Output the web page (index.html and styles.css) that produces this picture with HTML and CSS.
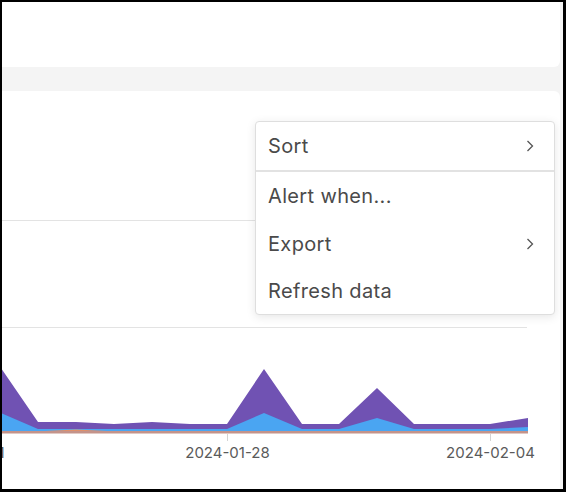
FILE: index.html
```html
<!DOCTYPE html>
<html lang="en">
<head>
<meta charset="utf-8">
<title>Chart menu</title>
<link rel="stylesheet" href="styles.css">
</head>
<body>
<div class="frame">
  <div class="card card-top"></div>
  <div class="card card-chart">
    <svg class="chart" width="558" height="398" viewBox="2 91 558 398" xmlns="http://www.w3.org/2000/svg">
      <line x1="0" y1="220.5" x2="527" y2="220.5" class="grid"/>
      <line x1="0" y1="327.5" x2="527" y2="327.5" class="grid"/>
      <polygon class="s-purple" points="-37,330 1,368 38,422 76,422 114,424 152,422 190,424 227,424 264,369 302,424 339,424 377,388 414,424 452,424 490,424 528,418 528,432 -37,432"/>
      <polygon class="s-blue" points="-37,400 1,413 38,429 76,429 114,429 152,429 190,429 227,429 264,413 302,429 339,429 377,418 414,429 452,429 490,429 528,427 528,432 -37,432"/>
      <polygon class="s-orange" points="45,431 76,429.5 107,431"/>
      <rect class="s-base" x="-37" y="431" width="565" height="2.5"/>
      <line x1="227.5" y1="434" x2="227.5" y2="441" class="tick"/>
      <line x1="490.5" y1="434" x2="490.5" y2="441" class="tick"/>
      <text x="-36" y="458" class="axis-label">2024-01-21</text>
      <text x="227.5" y="458" class="axis-label">2024-01-28</text>
      <text x="490.5" y="458" class="axis-label">2024-02-04</text>
    </svg>
    <div class="menu">
      <div class="menu-item">
        <span>Sort</span>
        <svg class="chev" width="8" height="12" viewBox="0 0 8 12"><path d="M1.5 1 L6.5 6 L1.5 11" fill="none" stroke="currentColor" stroke-width="1.3"/></svg>
      </div>
      <div class="menu-sep"></div>
      <div class="menu-item"><span>Alert when...</span></div>
      <div class="menu-item">
        <span>Export</span>
        <svg class="chev" width="8" height="12" viewBox="0 0 8 12"><path d="M1.5 1 L6.5 6 L1.5 11" fill="none" stroke="currentColor" stroke-width="1.3"/></svg>
      </div>
      <div class="menu-item"><span>Refresh data</span></div>
    </div>
  </div>
</div>
</body>
</html>
```

FILE: styles.css
```css
html {
  background: #000;
}
body {
  margin: 2px 3px 3px 2px;
  font-family: Inter, "Noto Sans", sans-serif;
}
.frame {
  width: 561px;
  height: 487px;
  background: #f4f4f4;
  display: flex;
  flex-direction: column;
  gap: 24px;
  overflow: hidden;
}
.card {
  background: #fff;
  margin-right: 3px;
}
.card-top {
  height: 65px;
  border-bottom-right-radius: 6px;
}
.card-chart {
  flex: 1;
  border-top-right-radius: 6px;
  position: relative;
}
.chart {
  display: block;
  overflow: hidden;
}
.grid {
  stroke: #e3e3e3;
  stroke-width: 1;
}
.tick {
  stroke: #d4d4d4;
  stroke-width: 1;
}
.s-purple { fill: #7052b3; }
.s-blue { fill: #4aa5f2; }
.s-orange { fill: #e0906a; }
.s-base { fill: #c4938a; }
.axis-label {
  font-family: Inter, "Noto Sans", sans-serif;
  font-size: 15px;
  fill: #5a5a5a;
  text-anchor: middle;
}
.menu {
  position: absolute;
  left: 253px;
  top: 30px;
  width: 298px;
  background: #fff;
  border: 1px solid #dedede;
  border-radius: 4px;
  box-shadow: 0 2px 10px rgba(0, 0, 0, 0.10);
  color: #4a4a4a;
  font-size: 20px;
  letter-spacing: 0.35px;
}
.menu-item {
  height: 48px;
  display: flex;
  align-items: center;
  justify-content: space-between;
  padding: 0 20px 0 12px;
}
.menu-item + .menu-item {
  height: 47px;
}
.menu-sep {
  height: 2px;
  background: #e2e2e2;
}
.chev {
  color: #555;
}
```
